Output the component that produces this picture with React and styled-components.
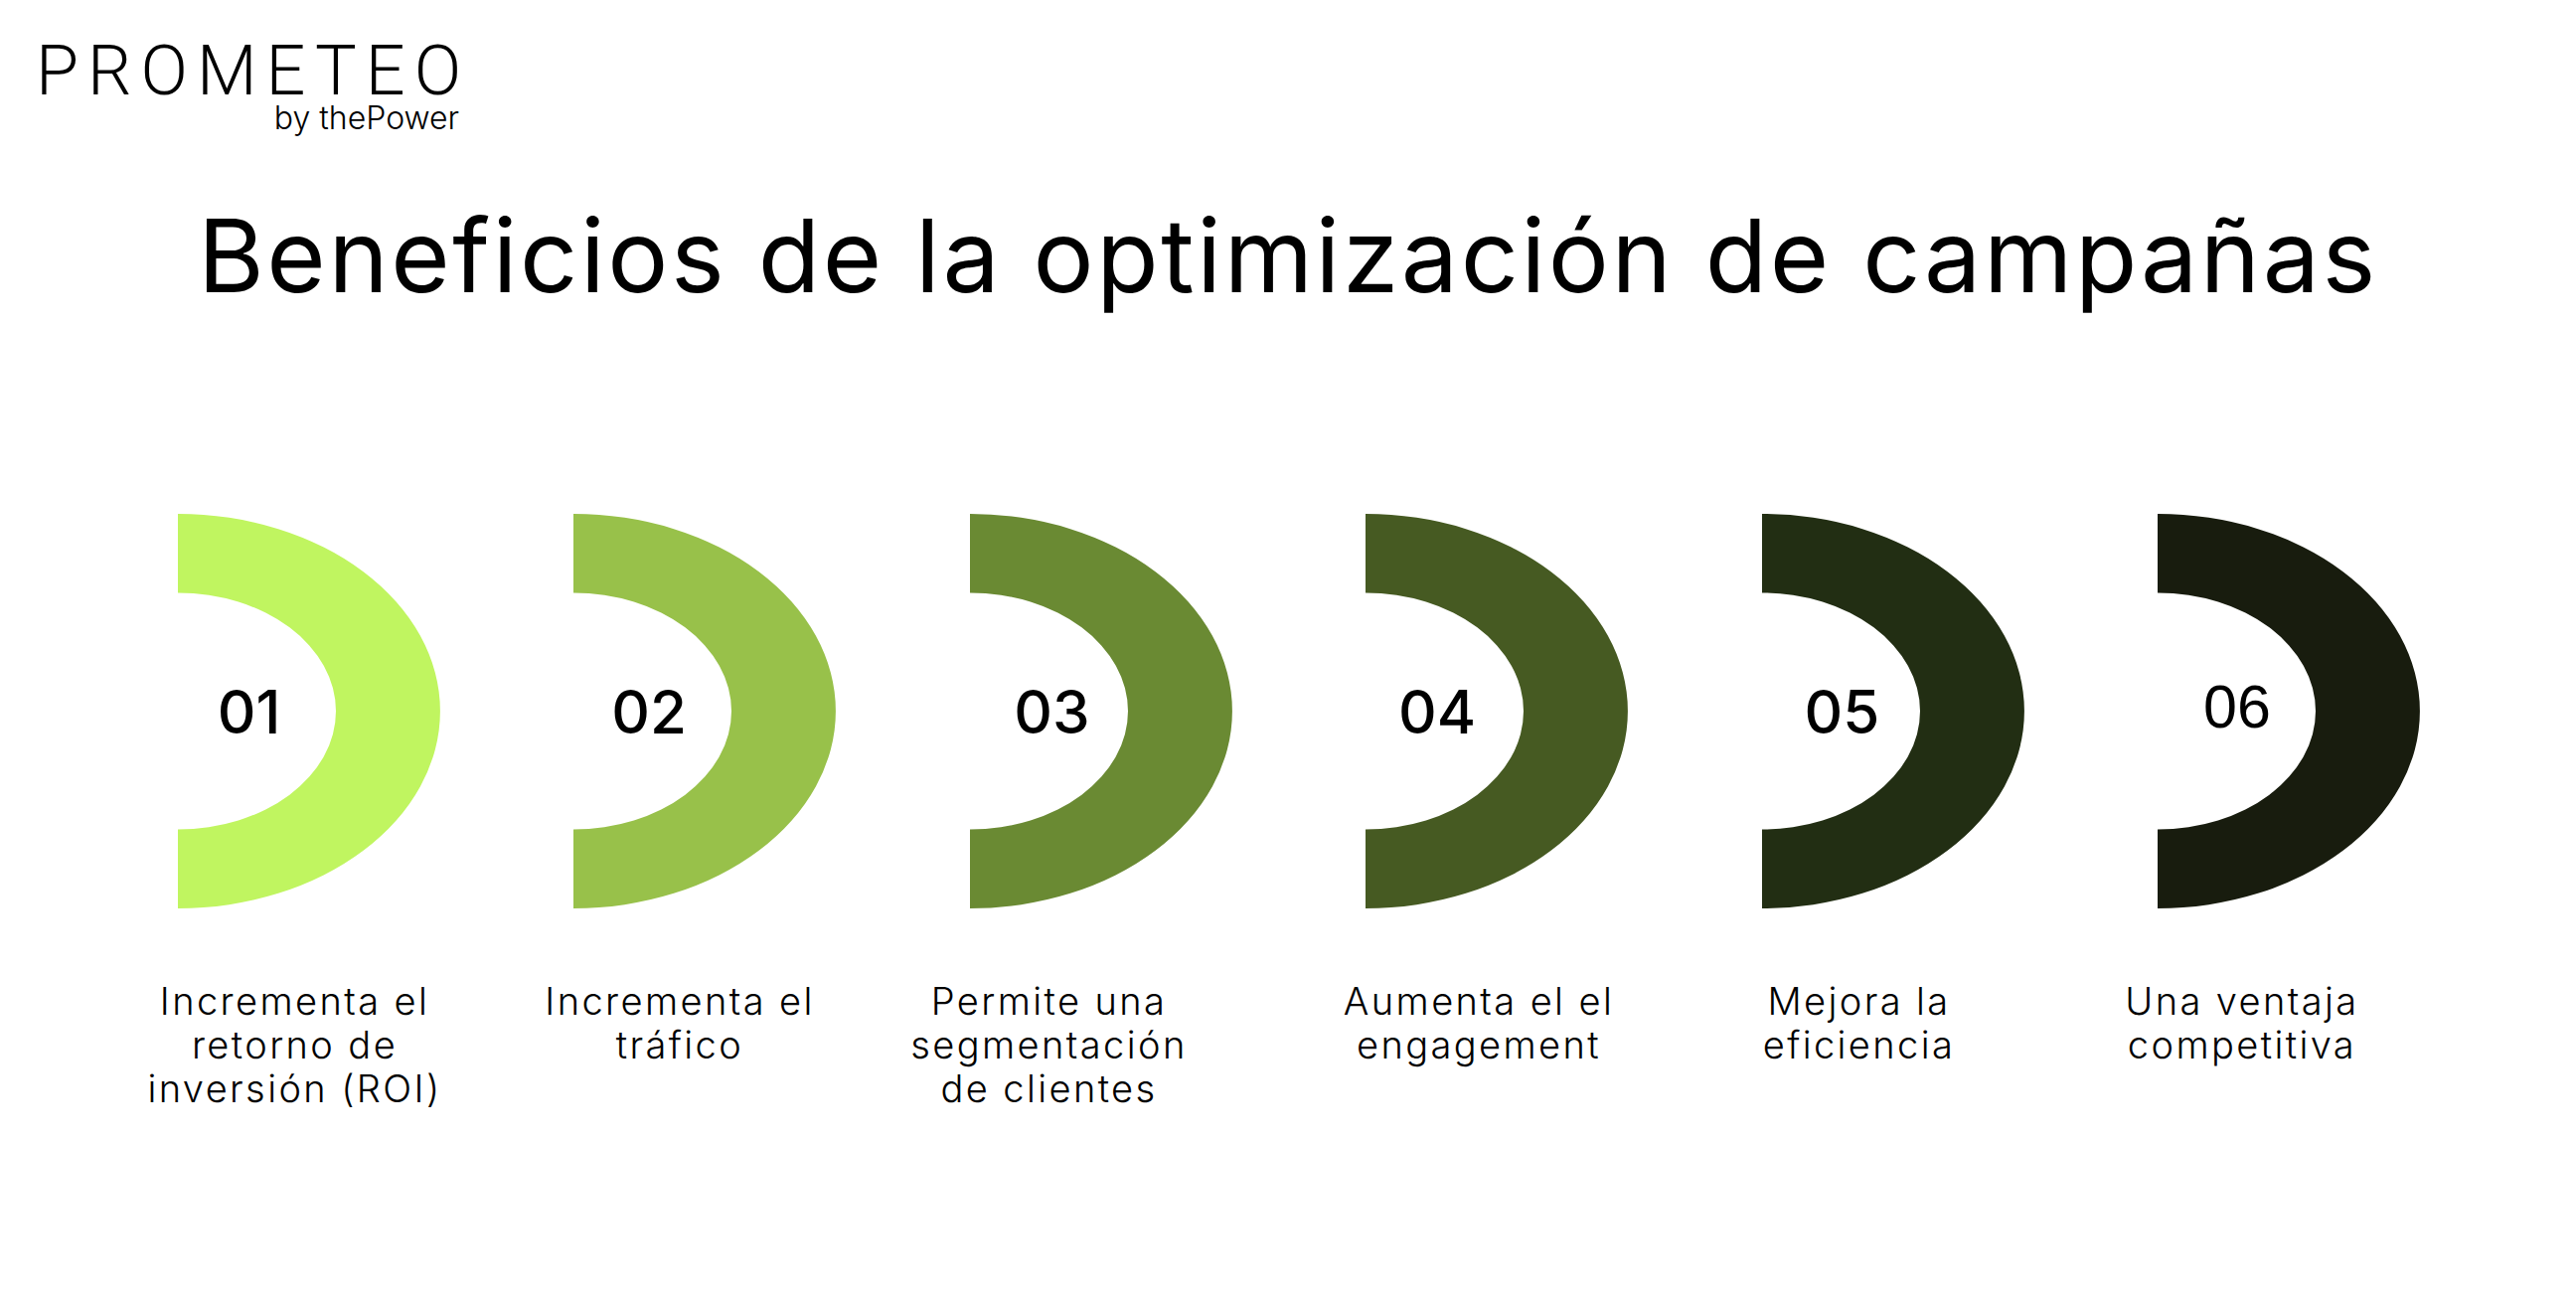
import styled, { createGlobalStyle } from "styled-components";

const GlobalStyle = createGlobalStyle`
  html, body {
    margin: 0;
    padding: 0;
    background: #ffffff;
  }

  body {
    font-family: Inter, "Noto Sans", "Liberation Sans", sans-serif;
    color: #000000;
  }
`;

const benefits = [
  { num: "01", color: "#C0F560", numX: 72, textX: 118, lines: ["Incrementa el", "retorno de", "inversión (ROI)"] },
  { num: "02", color: "#98C14A", numX: 76, textX: 107, lines: ["Incrementa el", "tráfico"] },
  { num: "03", color: "#6A8A33", numX: 83, textX: 80, lines: ["Permite una", "segmentación", "de clientes"] },
  { num: "04", color: "#465A22", numX: 72, textX: 114, lines: ["Aumenta el el", "engagement"] },
  { num: "05", color: "#222E13", numX: 81, textX: 98, lines: ["Mejora la", "eficiencia"] },
  { num: "06", color: "#181C0E", numX: 80, textX: 85, lines: ["Una ventaja", "competitiva"], plain: true },
];

const Page = styled.main`
  width: 2592px;
  height: 1310px;
  overflow: hidden;
`;

const Header = styled.header`
  padding: 41px 0 0 36px;
`;

const Logo = styled.div`
  display: inline-flex;
  flex-direction: column;
  align-items: flex-end;
`;

const Wordmark = styled.div`
  font-family: Roboto, "Liberation Sans", sans-serif;
  font-weight: 300;
  font-size: 70px;
  line-height: 60px;
  letter-spacing: 9px;
  margin-right: -9px;
  white-space: nowrap;
`;

const Tagline = styled.div`
  font-family: Inter, "Noto Sans", sans-serif;
  font-weight: 300;
  font-size: 32px;
  line-height: 1;
  margin-top: 2px;
  margin-right: 2px;
`;

const Title = styled.h1`
  margin: 71px 0 0 0;
  text-align: center;
  font-family: Inter, "Noto Sans", sans-serif;
  font-weight: 400;
  font-size: 102px;
  line-height: 1;
  letter-spacing: 2.6px;
`;

const Steps = styled.section`
  display: grid;
  grid-template-columns: repeat(6, 398.5px);
  padding-left: 178.5px;
  margin-top: 209px;
`;

const Step = styled.div`
  display: flex;
  flex-direction: column;
`;

const Arc = styled.div`
  position: relative;
  width: 264px;
  height: 397px;

  svg {
    display: block;
  }
`;

const Num = styled.span`
  position: absolute;
  left: ${(p) => p.$x}px;
  top: calc(50% - ${(p) => (p.$plain ? 5 : 0)}px);
  transform: translate(-50%, -50%);
  font-family: ${(p) => (p.$plain ? '"Liberation Sans", Arial, sans-serif' : 'Inter, "Noto Sans", sans-serif')};
  font-weight: ${(p) => (p.$plain ? 400 : 500)};
  font-size: ${(p) => (p.$plain ? 61 : 60)}px;
  line-height: 1;
  white-space: nowrap;
`;

const Label = styled.p`
  width: 360px;
  margin: 70.5px 0 0 ${(p) => p.$x - 180}px;
  text-align: center;
  font-family: Inter, "Noto Sans", sans-serif;
  font-weight: 300;
  font-size: 38px;
  line-height: 44px;
  letter-spacing: 2.4px;
`;

const HalfRing = ({ color }) => (
  <svg width="264" height="397" viewBox="0 0 264 397">
    <path
      d="M0 0 A264 198.5 0 0 1 0 397 L0 317.5 A159 119 0 0 0 0 79.5 Z"
      fill={color}
    />
  </svg>
);

const App = () => {
  return (
    <Page>
      <GlobalStyle />

      <Header>
        <Logo>
          <Wordmark>PROMETEO</Wordmark>
          <Tagline>by thePower</Tagline>
        </Logo>
      </Header>

      <Title>Beneficios de la optimización de campañas</Title>

      <Steps>
        {benefits.map((b) => (
          <Step key={b.num}>
            <Arc>
              <HalfRing color={b.color} />
              <Num $x={b.numX} $plain={b.plain}>
                {b.num}
              </Num>
            </Arc>
            <Label $x={b.textX}>
              {b.lines.map((line, i) => (
                <span key={i}>
                  {line}
                  <br />
                </span>
              ))}
            </Label>
          </Step>
        ))}
      </Steps>
    </Page>
  );
};

export default App;
